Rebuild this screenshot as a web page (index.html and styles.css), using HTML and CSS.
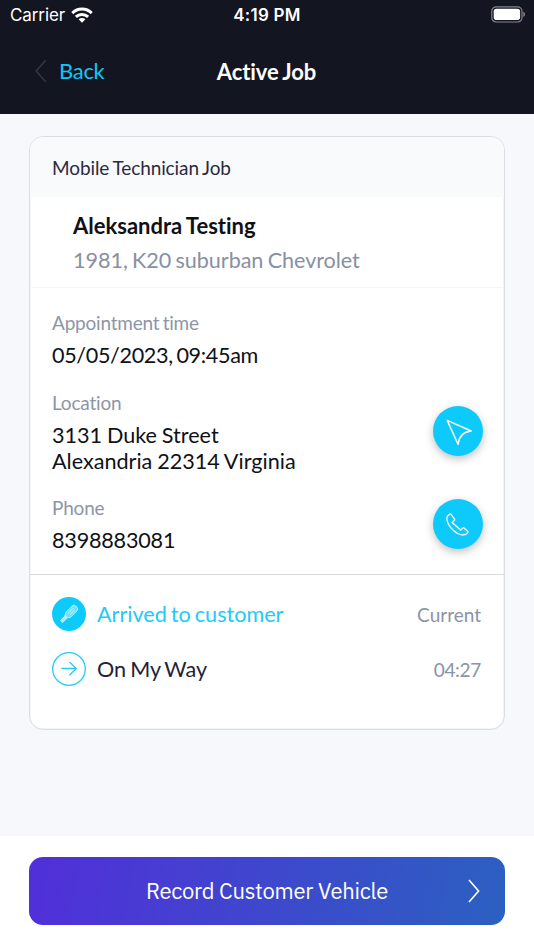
FILE: index.html
```html
<!DOCTYPE html>
<html lang="en">
<head>
<meta charset="utf-8">
<title>Active Job</title>
<link rel="stylesheet" href="styles.css">
</head>
<body>
<header class="top">
  <div class="status">
    <div class="carrier"><span class="carrier-name">Carrier</span>
      <svg class="wifi" width="22" height="16" viewBox="0 0 22 16" fill="none" stroke="#fff" stroke-width="3"><path d="M1.3 6.1a13.8 13.8 0 0 1 19.4 0"/><path d="M4.9 9.9a8.7 8.7 0 0 1 12.2 0"/><path d="M11 15.7 7.6 12.3a4.8 4.8 0 0 1 6.8 0z" fill="#fff" stroke="none"/></svg>
    </div>
    <span class="clock">4:19 PM</span>
    <svg class="battery" width="35" height="17" viewBox="0 0 35 17"><rect x=".8" y=".8" width="30.2" height="15.2" rx="4.4" fill="none" stroke="#85868e" stroke-width="1.2"/><rect x="2.7" y="2.7" width="26.4" height="11.4" rx="2.8" fill="#fff"/><path d="M32.3 5.8c2.2.6 2.2 4.6 0 5.2z" fill="#85868e"/></svg>
  </div>
  <nav class="nav">
    <a class="back"><svg width="12" height="24" viewBox="0 0 12 24" fill="none" stroke="#353745" stroke-width="1.5"><path d="M10.7 1.2 1.2 12l9.5 10.8"/></svg><span class="back-label">Back</span></a>
    <h1 class="title">Active Job</h1>
    <span></span>
  </nav>
</header>
<main class="content">
  <section class="card">
    <div class="card-head"><span class="job-type">Mobile Technician Job</span></div>
    <div class="customer">
      <div class="name"><span class="name-text">Aleksandra Testing</span></div>
      <div class="vehicle"><span class="vehicle-text">1981, K20 suburban Chevrolet</span></div>
    </div>
    <div class="details">
      <div class="field first">
        <div><div class="label">Appointment time</div><div class="value date">05/05/2023, 09:45am</div></div>
      </div>
      <div class="field">
        <div><div class="label">Location</div><div class="value">3131 Duke Street<br>Alexandria 22314 Virginia</div></div>
        <button class="round" aria-label="Directions"><svg width="50" height="50" viewBox="0 0 50 50" fill="none" stroke="#fff" stroke-width="1.4" stroke-linejoin="round"><path d="M14.2 14.4 38.2 25C31 25.7 26 30 25 38.3z"/></svg></button>
      </div>
      <div class="field phone">
        <div><div class="label">Phone</div><div class="value number">8398883081</div></div>
        <button class="round" aria-label="Call"><svg width="50" height="50" viewBox="0 0 50 50" fill="none" stroke="#fff" stroke-width="1.3" stroke-linejoin="round"><path d="M16.800 15.100 14.500 17.200c-.8 1-.9 2.600-.3 4.700 1.900 7 9.800 13.700 15.600 14 2.200.2 3.800-.6 5-2.600q.3-.6-.2-1.100l-3.600-3.300q-.6-.5-1.200.1l-2.200 2.100-8.500-7.500 2.300-2.300q.5-.6.100-1.200l-3.400-4.800q-.6-.8-1.300-.2z"/></svg></button>
      </div>
    </div>
    <div class="steps">
      <div class="step">
        <svg class="step-icon" width="34" height="34" viewBox="0 0 34 34"><circle cx="17" cy="17" r="17" fill="#0dcafb"/><g transform="rotate(-45 17 17)" stroke="#c4f2fe" fill="#6edffd" stroke-width=".9"><rect x="6.200" y="15.500" width="9" height="3" rx="1.500" fill="#a5ecfe"/><path d="M13.200 15.300 16 13.600h8.700q2.600 0 2.600 2.200v2.400q0 2.200-2.600 2.200H16l-2.800-1.700z"/><path d="M17 15.900h7.500M17 18.100h7.500" fill="none"/></g></svg>
        <span class="step-name active">Arrived to customer</span><span class="when">Current</span>
      </div>
      <div class="step">
        <svg class="step-icon" width="34" height="34" viewBox="0 0 34 34" fill="none" stroke="#25cbfa" stroke-width="1.300"><circle cx="17" cy="17" r="16.300"/><path d="M9.300 16.500h14.900M17.300 9.900l7 6.600-7 6.800"/></svg>
        <span class="step-name second">On My Way</span><span class="when time">04:27</span>
      </div>
    </div>
  </section>
</main>
<footer class="bottom">
  <button class="record"><span class="record-label">Record Customer Vehicle</span><svg class="chevron" width="12" height="24" viewBox="0 0 12 24" fill="none" stroke="#fff" stroke-width="1.600"><path d="m1 1 9.600 11L1 23"/></svg></button>
</footer>
</body>
</html>
```
FILE: styles.css
```css
* { box-sizing: border-box; }
body { margin: 0; height: 950px; display: flex; flex-direction: column; background: #fff; font-family: Lato, sans-serif; color: #101116; overflow: hidden; font-variant-ligatures: none; }
button { border: 0; padding: 0; font: inherit; }
svg { display: block; flex: none; }
.top { height: 114px; flex: none; background: #131521; color: #fff; }
.status { height: 30px; display: grid; grid-template-columns: 1fr auto 1fr; align-items: center; padding: 0 8px 0 10px; font-family: Inter, sans-serif; font-size: 17px; }
.carrier { display: flex; align-items: center; gap: 6px; }
.carrier-name { letter-spacing: -.1px; }
.wifi { margin-top: -1px; }
.clock { font-weight: 600; letter-spacing: .25px; margin-right: 2px; }
.battery { justify-self: end; margin-top: -2px; }
.nav { height: 84px; display: grid; grid-template-columns: 1fr auto 1fr; align-items: center; padding: 0 35px 2px 35px; }
.back { display: flex; align-items: center; gap: 12px; color: #12c6f6; font-size: 22px; letter-spacing: -.3px; }
.back-label { margin-top: -1px; }
.title { margin: 0 1px 0 0; font-size: 22px; font-weight: 700; letter-spacing: -.1px; word-spacing: -1px; }
.content { height: 722px; flex: none; padding: 22px 29px 0; background: #f7f8fb; }
.card { height: 594px; border: 1px solid #dcdee1; box-shadow: inset 0 0 0 .5px #e6e8ea; border-radius: 14px; background: #fff; overflow: hidden; }
.card-head { height: 60px; padding: 18px 22px 0; background: #f9fafc; line-height: 26px; font-size: 19px; color: #292a40; word-spacing: -1px; letter-spacing: -.1px; }
.customer { height: 91px; padding: 12px 43px 0; border-bottom: 1px solid #f4f5f7; }
.name { font-size: 22px; line-height: 34px; font-weight: 700; word-spacing: -1px; }
.vehicle { font-size: 21.6px; line-height: 34px; color: #8790a3; word-spacing: -1.200px; letter-spacing: -.05px; }
.details { height: 287px; padding: 21px 22px 0 22px; border-bottom: 1.5px solid #d9dadd; }
.field { display: flex; justify-content: space-between; margin-bottom: 20px; }
.field.first { margin-bottom: 21px; }
.label { font-size: 19px; line-height: 28px; color: #8d95a8; word-spacing: -1.500px; letter-spacing: -.2px; }
.value { font-size: 21.6px; line-height: 26px; margin-top: 5px; word-spacing: -.7px; }
.date { letter-spacing: -.35px; word-spacing: -1.500px; }
.number { letter-spacing: -.2px; }
.round { width: 50px; height: 50px; border-radius: 50%; background: #0dcafb; margin: 17px -.5px 0 0; box-shadow: 0 3px 8px rgba(0,0,0,.25); }
.phone .round { margin-top: 4.500px; }
.steps { padding: 22px 23px 0 21.5px; }
.step { display: flex; align-items: center; height: 34px; margin-bottom: 21px; }
.step-name { margin: 0 0 0 11.5px; font-size: 21.6px; color: #222338; word-spacing: -1.500px; }
.step-name.active { color: #20cafa; }
.when { margin-left: auto; font-size: 19px; color: #8b93a7; }
.time { letter-spacing: -.3px; }
.bottom { padding: 21px 29px 0; }
.record { position: relative; width: 476px; height: 68px; padding-bottom: 2px; border-radius: 14px; background: linear-gradient(100deg, #512fd9, #2b60c1); color: #fff; font-family: "IBM Plex Sans", Roboto, sans-serif; font-size: 22px; }
.record-label { letter-spacing: -.27px; }
.chevron { position: absolute; right: 25px; top: 22px; }
```
